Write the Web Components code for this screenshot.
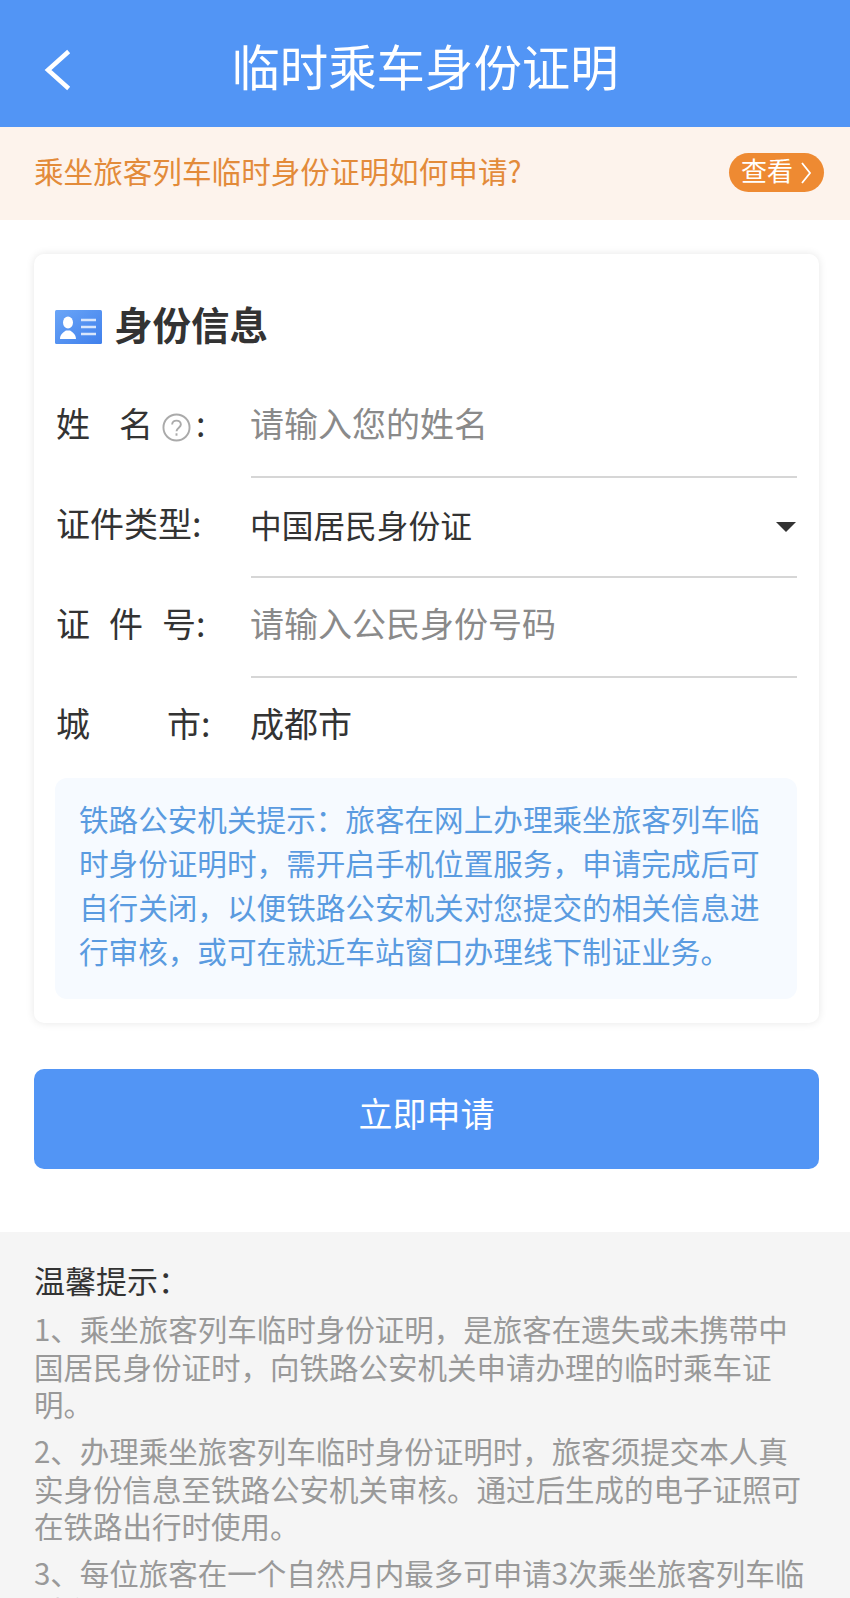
<!DOCTYPE html>
<html lang="zh">
<head>
<meta charset="utf-8">
<title>临时乘车身份证明</title>
<style>
    html, body { margin: 0; height: 1598px; overflow: hidden; background: #fff; }
    body { font-family: "Noto Sans CJK SC", "Noto Sans", sans-serif; color: #333; }
</style>
</head>
<body>
<app-header>临时乘车身份证明</app-header>
<notice-bar>乘坐旅客列车临时身份证明如何申请?</notice-bar>
<info-card title="身份信息">
    <form-row underline>
        <field-label slot="label" gap="29"><span>姓</span><span>名</span><help-icon></help-icon><span>:</span></field-label>
        <span style="font-size:34px;color:#8a8a8a">请输入您的姓名</span>
    </form-row>
    <form-row underline>
        <field-label slot="label" gap="0"><span>证件类型:</span></field-label>
        <span style="display:block;margin-top:4px;font-size:31.7px;color:#333">中国居民身份证</span>
        <select-arrow slot="end"></select-arrow>
    </form-row>
    <form-row underline>
        <field-label slot="label" gap="19"><span>证</span><span>件</span><span>号:</span></field-label>
        <span style="font-size:34px;color:#8a8a8a">请输入公民身份号码</span>
    </form-row>
    <form-row>
        <field-label slot="label" gap="77"><span>城</span><span>市:</span></field-label>
        <span style="font-size:34px;color:#333">成都市</span>
    </form-row>
    <tip-box>铁路公安机关提示：旅客在网上办理乘坐旅客列车临时身份证明时，需开启手机位置服务，申请完成后可自行关闭，以便铁路公安机关对您提交的相关信息进行审核，或可在就近车站窗口办理线下制证业务。</tip-box>
</info-card>
<submit-button>立即申请</submit-button>
<tips-panel heading="温馨提示：">
    <p>1、乘坐旅客列车临时身份证明，是旅客在遗失或未携带中国居民身份证时，向铁路公安机关申请办理的临时乘车证明。</p>
    <p>2、办理乘坐旅客列车临时身份证明时，旅客须提交本人真实身份信息至铁路公安机关审核。通过后生成的电子证照可在铁路出行时使用。</p>
    <p>3、每位旅客在一个自然月内最多可申请3次乘坐旅客列车临时身份证明。</p>
</tips-panel>

<script>
class AppHeader extends HTMLElement {
    constructor() {
        super();
        this.attachShadow({ mode: 'open' });
    }
    connectedCallback() {
        this.shadowRoot.innerHTML = `
            <style>
                :host { display: flex; align-items: center; justify-content: center; height: 127px; background: #5295f5; color: #fff; position: relative; }
                .title { font-size: 48.4px; line-height: 1; margin-top: 4px; }
                svg { position: absolute; left: 43px; top: 49px; }
            </style>
            <svg width="30" height="42" viewBox="0 0 30 42" fill="none" stroke="#fff" stroke-width="4.5" stroke-linecap="square">
                <path d="M24 4 L5 21 L24 38"/>
            </svg>
            <div class="title"><slot></slot></div>
        `;
    }
}

class NoticeBar extends HTMLElement {
    constructor() {
        super();
        this.attachShadow({ mode: 'open' });
    }
    connectedCallback() {
        this.shadowRoot.innerHTML = `
            <style>
                :host { display: flex; align-items: center; justify-content: space-between; height: 93px; padding: 0 26px 0 34px; background: #fdf3ec; color: #e38b3a; font-size: 29.6px; }
                .text { margin-top: -6px; }
                .more { display: flex; align-items: center; gap: 7px; height: 39px; width: 95px; box-sizing: border-box; margin-top: -2px; padding: 0 0 6px 12px; border-radius: 20px; background: #ee8a32; color: #fff; font-size: 26px; }
                svg { margin-top: 6px; }
            </style>
            <div class="text"><slot></slot></div>
            <div class="more">查看
                <svg width="12" height="26" viewBox="0 0 12 26" fill="none" stroke="#fff" stroke-width="1.8"><path d="M2 3 L10 13 L2 23"/></svg>
            </div>
        `;
    }
}

class InfoCard extends HTMLElement {
    constructor() {
        super();
        this.attachShadow({ mode: 'open' });
    }
    connectedCallback() {
        this.shadowRoot.innerHTML = `
            <style>
                :host { display: block; margin: 34px 31px 0 34px; padding: 0 22px 23px 21px; height: 769px; box-sizing: border-box; background: #fff; border-radius: 10px; box-shadow: 0 0 8px rgba(0, 0, 0, .1); }
                .head { display: flex; align-items: center; gap: 12px; height: 124px; padding-top: 20px; box-sizing: border-box; font-size: 38.5px; font-weight: 700; color: #333; }
                svg { margin-top: 2px; }
                span { margin-top: -6px; }
            </style>
            <div class="head">
                <svg width="47" height="34" viewBox="0 0 47 34">
                    <defs><linearGradient id="g" x1="0" y1="0" x2="1" y2="1"><stop offset="0" stop-color="#6aa5f7"/><stop offset="1" stop-color="#4080ec"/></linearGradient></defs>
                    <rect width="47" height="34" rx="1.5" fill="url(#g)"/>
                    <ellipse cx="13" cy="12.5" rx="5" ry="6" fill="#fff"/>
                    <path d="M5 29 C5 24 9 22 11 20.5 L15 20.5 C17 22 21 24 21 29 Z" fill="#fff"/>
                    <path d="M26 10 H41 M26 17 H41 M26 24 H41" stroke="#d8e6fc" stroke-width="2.5"/>
                </svg>
                <span>${this.getAttribute('title')}</span>
            </div>
            <slot></slot>
        `;
    }
}

class FormRow extends HTMLElement {
    constructor() {
        super();
        this.attachShadow({ mode: 'open' });
    }
    connectedCallback() {
        this.shadowRoot.innerHTML = `
            <style>
                :host { display: flex; align-items: flex-start; height: 100px; }
                .label { width: 196px; flex: none; padding: 21px 0 0 1px; box-sizing: border-box; }
                .field { flex: 1; display: flex; align-items: center; justify-content: space-between; height: 98px; padding-bottom: 10px; box-sizing: border-box; }
                :host([underline]) .field { height: 100px; border-bottom: 2px solid #d6d6d6; }
                .value { margin-left: -1px; }
            </style>
            <div class="label"><slot name="label"></slot></div>
            <div class="field">
                <div class="value"><slot></slot></div>
                <slot name="end"></slot>
            </div>
        `;
    }
}

class FieldLabel extends HTMLElement {
    constructor() {
        super();
        this.attachShadow({ mode: 'open' });
    }
    connectedCallback() {
        this.shadowRoot.innerHTML = `
            <style>
                :host { display: flex; align-items: center; gap: ${this.getAttribute('gap')}px; font-size: 34px; line-height: 48px; color: #333; }
            </style>
            <slot></slot>
        `;
    }
}

class HelpIcon extends HTMLElement {
    constructor() {
        super();
        this.attachShadow({ mode: 'open' });
    }
    connectedCallback() {
        this.shadowRoot.innerHTML = `
            <style>
                :host { display: flex; margin: 9px -24px 0 -20px; }
            </style>
            <svg width="29" height="29" viewBox="0 0 30 30" fill="none" stroke="#aaa" stroke-width="2">
                <circle cx="15" cy="15" r="13.5"/>
                <path d="M10.5 12 C10.5 6.5 19.5 6.5 19.5 12 C19.5 15 15 15.5 15 19"/>
                <path d="M15 21 V23.5"/>
            </svg>
        `;
    }
}

class SelectArrow extends HTMLElement {
    constructor() {
        super();
        this.attachShadow({ mode: 'open' });
    }
    connectedCallback() {
        this.shadowRoot.innerHTML = `
            <style>
                :host { display: block; width: 0; height: 0; margin: 10px 1px 0 0; border-left: 10px solid transparent; border-right: 10px solid transparent; border-top: 10px solid #333; }
            </style>
        `;
    }
}

class TipBox extends HTMLElement {
    constructor() {
        super();
        this.attachShadow({ mode: 'open' });
    }
    connectedCallback() {
        this.shadowRoot.innerHTML = `
            <style>
                :host { display: block; padding: 19px 22px 0 24px; height: 221px; box-sizing: border-box; border-radius: 12px; background: #f6faff; color: #5a9be0; font-size: 29.6px; line-height: 44px; }
            </style>
            <slot></slot>
        `;
    }
}

class SubmitButton extends HTMLElement {
    constructor() {
        super();
        this.attachShadow({ mode: 'open' });
    }
    connectedCallback() {
        this.shadowRoot.innerHTML = `
            <style>
                :host { display: flex; align-items: center; justify-content: center; height: 100px; margin: 46px 31px 0 34px; padding-bottom: 14px; box-sizing: border-box; border-radius: 10px; background: #5295f5; color: #fff; font-size: 34px; }
            </style>
            <slot></slot>
        `;
    }
}

class TipsPanel extends HTMLElement {
    constructor() {
        super();
        this.attachShadow({ mode: 'open' });
    }
    connectedCallback() {
        this.shadowRoot.innerHTML = `
            <style>
                :host { display: block; margin-top: 63px; padding: 26px 36px 0 34px; height: 366px; box-sizing: border-box; overflow: hidden; background: #f5f5f5; color: #999; font-size: 29.5px; line-height: 37.5px; }
                .heading { color: #333; font-size: 31px; line-height: 44px; margin-bottom: 8px; }
                ::slotted(p) { margin: 0 0 9.5px; }
            </style>
            <div class="heading">${this.getAttribute('heading')}</div>
            <slot></slot>
        `;
    }
}

customElements.define('app-header', AppHeader);
customElements.define('notice-bar', NoticeBar);
customElements.define('info-card', InfoCard);
customElements.define('form-row', FormRow);
customElements.define('field-label', FieldLabel);
customElements.define('help-icon', HelpIcon);
customElements.define('select-arrow', SelectArrow);
customElements.define('tip-box', TipBox);
customElements.define('submit-button', SubmitButton);
customElements.define('tips-panel', TipsPanel);
</script>
</body>
</html>
